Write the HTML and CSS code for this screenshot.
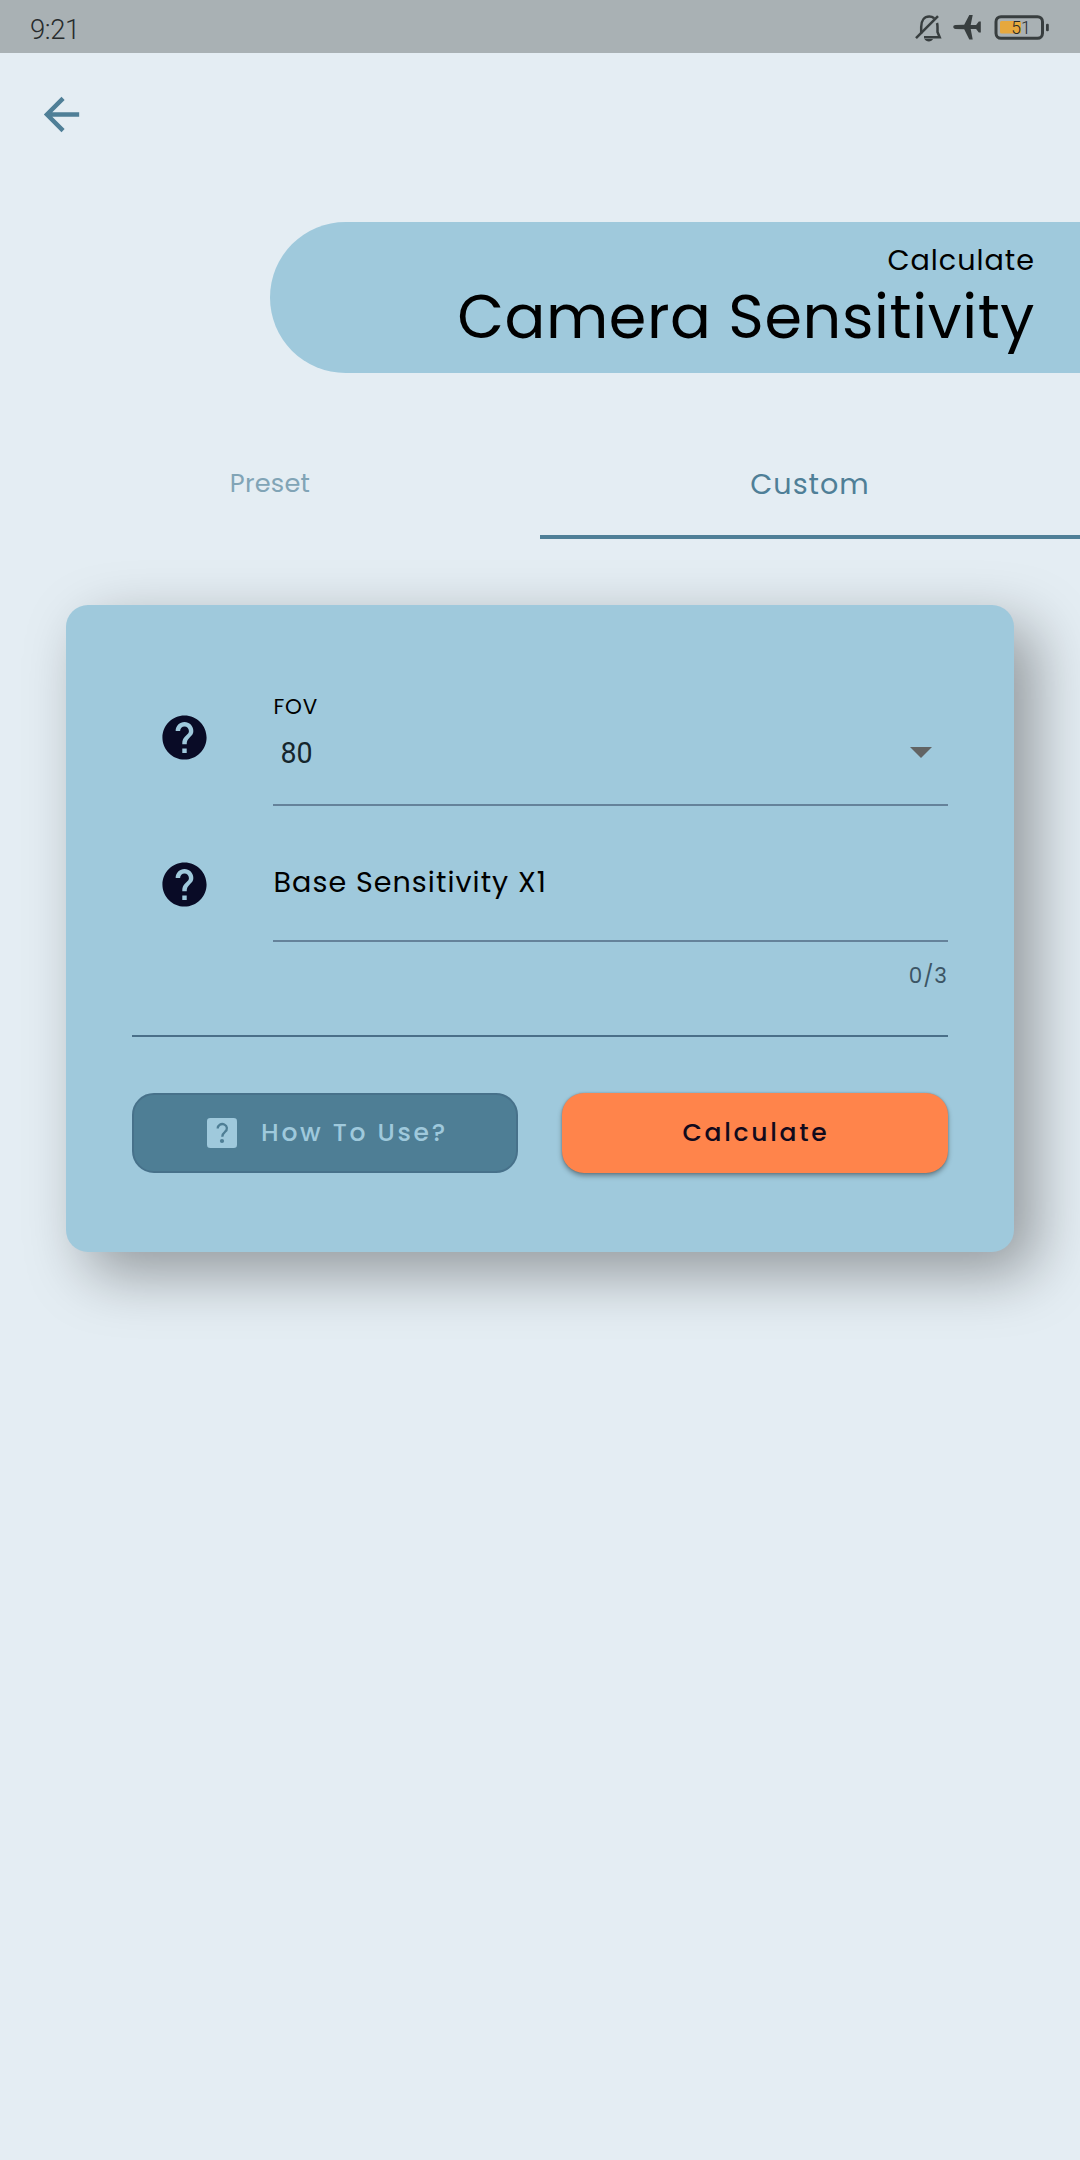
FILE: index.html
```html
<!DOCTYPE html>
<html lang="en">
<head>
<meta charset="utf-8">
<title>Camera Sensitivity</title>
<link rel="stylesheet" href="styles.css">
</head>
<body>
<div class="status">
  <span class="clock">9:21</span>
  <svg class="status-icons" width="136" height="30" viewBox="0 0 136 30">
    <g fill="none" stroke="#383e3f" stroke-width="2.5">
      <path d="M7.200 20.500V14c0-6.500 3.300-10.500 8-10.500 2 0 3.600.6 5 1.800"/>
      <path d="M23 10c.4 1.200.5 2.500.5 4v5l2.200 5.300H10"/>
      <path d="M2 25.200 24 3.200"/>
    </g>
    <path d="M10.500 26h8.500c-.7 1.600-2.300 2.500-4.200 2.500s-3.600-.9-4.300-2.500z" fill="#383e3f"/>
    <path d="M39.300 14c0-1.200.9-1.900 2.100-1.900l8.800-.4L55.300 2h3.400l-2 9.900 5.400.2 2.700-3.600h2v11h-2l-2.700-3.600-5.400.2 2 10.400h-3.400l-5.100-10.200-8.800-.4c-1.200-.1-2.100-.7-2.100-1.900z" fill="#383e3f"/>
    <rect x="86" y="8" width="21" height="12.500" rx="1.500" fill="#e6a83e"/>
    <rect x="82" y="3.700" width="46.500" height="21.600" rx="5" fill="none" stroke="#383e3f" stroke-width="3"/>
    <rect x="132" y="10.700" width="2.800" height="7.500" rx="1.200" fill="#383e3f"/>
    <text class="battery" x="97.300" y="20.700">51</text>
  </svg>
</div>
<nav class="topbar">
  <svg class="back" width="53" height="53" viewBox="0 0 24 24" fill="#4f7f97"><path d="M20 11H7.830l5.590-5.590L12 4l-8 8 8 8 1.410-1.410L7.830 13H20v-2z"/></svg>
</nav>
<header class="banner">
  <div class="kicker">Calculate</div>
  <h1 class="title">Camera Sensitivity</h1>
</header>
<div class="tabs">
  <div class="tab"><span class="tab-idle">Preset</span></div>
  <div class="tab active"><span class="tab-current">Custom</span></div>
</div>
<main class="card">
  <div class="row row-fov">
    <svg class="help" width="53" height="53" viewBox="0 0 24 24" fill="#090b26"><path d="M12 2C6.480 2 2 6.480 2 12s4.480 10 10 10 10-4.480 10-10S17.520 2 12 2zm1 17h-2v-2h2v2zm2.070-7.750l-.9.920C13.450 12.900 13 13.500 13 15h-2v-.5c0-1.100.450-2.100 1.170-2.830l1.240-1.260c.370-.360.590-.860.590-1.410 0-1.100-.9-2-2-2s-2 .9-2 2H8c0-2.210 1.790-4 4-4s4 1.790 4 4c0 .880-.360 1.680-.930 2.250z"/></svg>
    <div class="field field-fov">
      <label class="label">FOV</label>
      <div class="select"><span class="value">80</span>
        <svg width="22" height="11" viewBox="0 0 22 11"><path d="M0 0h22L11 11z" fill="#626464"/></svg>
      </div>
    </div>
  </div>
  <div class="row row-base">
    <svg class="help" width="53" height="53" viewBox="0 0 24 24" fill="#090b26"><path d="M12 2C6.480 2 2 6.480 2 12s4.480 10 10 10 10-4.480 10-10S17.520 2 12 2zm1 17h-2v-2h2v2zm2.070-7.750l-.9.920C13.450 12.900 13 13.500 13 15h-2v-.5c0-1.100.450-2.100 1.170-2.830l1.240-1.260c.370-.360.590-.860.590-1.410 0-1.100-.9-2-2-2s-2 .9-2 2H8c0-2.210 1.790-4 4-4s4 1.790 4 4c0 .880-.360 1.680-.930 2.250z"/></svg>
    <div class="field field-base"><span class="placeholder">Base Sensitivity X1</span></div>
  </div>
  <div class="counter">0/3</div>
  <div class="divider"></div>
  <div class="actions">
    <div class="btn btn-help">
      <svg width="30" height="30" viewBox="0 0 30 30"><rect width="30" height="30" rx="3.300" fill="#9fc9dc"/><path d="M10.700 10.500a4.600 4.300 0 1 1 7.300 3.300c-1.900 1.500-2.700 2.500-2.700 4.900" fill="none" stroke="#4e7e95" stroke-width="2.300"/><circle cx="15" cy="23" r="2.100" fill="#4e7e95"/></svg>
      <span class="btn-text">How To Use?</span>
    </div>
    <div class="btn btn-go"><span class="btn-text">Calculate</span></div>
  </div>
</main>
</body>
</html>
```
FILE: styles.css
```css
* { box-sizing: border-box; }
body {
  margin: 0;
  min-height: 2160px;
  background: #e4edf3;
  font-family: Poppins, Inter, sans-serif;
  color: #000;
  overflow-x: hidden;
}
svg { display: block; flex: none; }
.status {
  height: 53px;
  background: #a9b1b4;
  display: flex;
  justify-content: space-between;
  align-items: flex-start;
  padding: 12px 30px 0 30px;
}
.clock { margin-top: 1px; font: 300 27.500px/34px Roboto, sans-serif; color: #272b2c; letter-spacing: -.4px; }
.status-icons { margin-top: 1px; }
.battery { font: 300 17.500px Roboto, sans-serif; fill: #26282a; }
.topbar { height: 169.400px; padding: 35px 0 0 35px; }
.banner {
  height: 151px;
  margin-left: 270px;
  padding: 23px 45px 0 0;
  background: #9fc9dc;
  border-radius: 76px 0 0 76px;
  text-align: right;
}
.kicker { font-size: 28.600px; line-height: 30px; letter-spacing: 1px; }
.title { margin: 12px 0 0; font-size: 60.500px; font-weight: 400; line-height: 60px; letter-spacing: .6px; }
.tabs { display: grid; grid-template-columns: 1fr 1fr; height: 109px; margin-top: 56.600px; }
.tab { display: flex; justify-content: center; padding-top: 39px; color: #4f7f97; }
.active { border-bottom: 4.500px solid #4f7f97; }
.tab-idle { font-size: 25.700px; line-height: 28px; color: #81a4b6; letter-spacing: .2px; }
.tab-current { font-size: 28.600px; line-height: 30px; letter-spacing: 1px; }
.card {
  width: 948px;
  height: 647px;
  margin: 66px auto 0;
  padding: 82px 66px 0;
  background: #9fc9dc;
  border-radius: 22px;
  box-shadow: 21px 21px 60px rgba(0, 0, 0, .36);
}
.row { display: grid; grid-template-columns: 141px 675px; }
.row-fov { height: 119px; }
.row-base { height: 136px; }
.help { margin-left: 26px; }
.row-fov .help { margin-top: 24px; }
.row-base .help { margin-top: 52px; }
.field { border-bottom: 2.500px solid #65829a; }
.field-fov { padding-top: 9px; }
.label { display: block; padding-left: .5px; font-size: 21.450px; line-height: 22px; letter-spacing: .8px; }
.select { display: flex; justify-content: space-between; align-items: center; padding: 0 16px 0 7.500px; margin-top: 18px; }
.value { font: 400 28.600px/34px Roboto, sans-serif; color: #15252c; }
.field-base { padding-top: 61px; }
.placeholder { display: block; padding-left: .5px; font-size: 28.600px; line-height: 30px; letter-spacing: 1.050px; }
.counter { margin-top: 23px; height: 22px; text-align: right; font-size: 21.450px; line-height: 22px; color: #3c5565; letter-spacing: 1px; }
.divider { margin-top: 48px; height: 2px; background: #4a6f89; }
.actions { display: grid; grid-template-columns: 1fr 1fr; gap: 44px; margin-top: 56px; }
.btn { height: 80px; border-radius: 22px; display: flex; align-items: center; justify-content: center; }
.btn-help { padding-left: 5px; background: #4e7e95; border: 2.500px solid #47718a; color: #9fc9dc; gap: 24px; }
.btn-go { padding-left: 2px; background: #ff844b; color: #120a1c; box-shadow: 0 3px 5px rgba(0, 0, 0, .35), 0 0 2px rgba(0, 0, 0, .25); }
.btn-text { font-size: 25px; font-weight: 500; line-height: 28px; letter-spacing: 2.750px; }
```
